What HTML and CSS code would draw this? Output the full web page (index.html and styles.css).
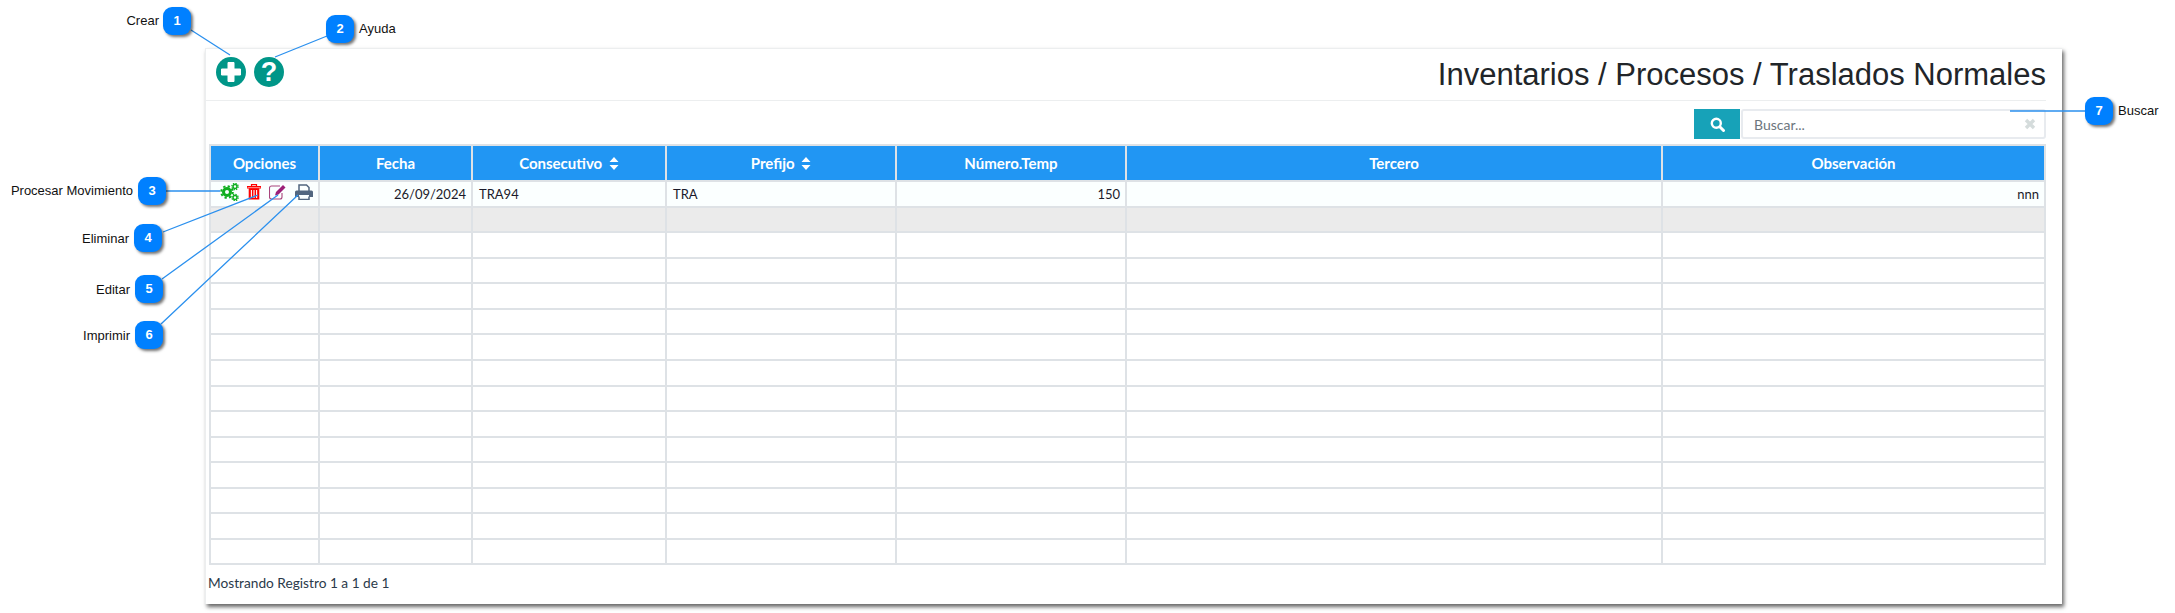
FILE: index.html
```html
<!DOCTYPE html>
<html lang="en">
  <head>
    <meta charset="UTF-8" />
    <title>Traslados Normales</title>
    <link rel="stylesheet" href="styles.css">
  </head>
  <body>
    <div class="panel">
      <div class="topbar">
        <div class="actions">
          <svg class="round" viewBox="0 0 30 30"><circle cx="15" cy="15" r="15" fill="#009688"/><path d="M12 5.500h6v6.500h6.500v6H18v6.500h-6V18H5.500v-6H12z" fill="#fff" stroke="#fff" stroke-linejoin="round"/></svg>
          <span class="round help">?</span>
        </div>
        <h1>Inventarios / Procesos / Traslados Normales</h1>
      </div>
      <div class="searchbar">
        <button class="searchBtn">
          <svg width="15" height="15" viewBox="0 0 15 15"><circle cx="6.300" cy="6.300" r="4.500" fill="none" stroke="#fff" stroke-width="2.400"/><path d="M9.800 9.800l3.700 3.700" stroke="#fff" stroke-width="3" stroke-linecap="round"/></svg>
        </button>
        <div class="searchInput">
          <span>Buscar...</span>
          <svg width="12" height="12" viewBox="0 0 12 12"><path d="M2 2l8 8M10 2l-8 8" stroke="#d5dcdc" stroke-width="3.400"/></svg>
        </div>
      </div>
      <table>
        <colgroup>
          <col class="c1" /><col class="c2" /><col class="c3" /><col class="c4" /><col class="c5" /><col class="c6" /><col />
        </colgroup>
        <thead>
          <tr>
            <th>Opciones</th>
            <th>Fecha</th>
            <th>Consecutivo <svg class="sort" viewBox="0 0 10 13"><path d="M5 0l4.500 5h-9zM5 13L.5 8h9z" fill="#fff"/></svg></th>
            <th>Prefijo <svg class="sort" viewBox="0 0 10 13"><path d="M5 0l4.500 5h-9zM5 13L.5 8h9z" fill="#fff"/></svg></th>
            <th>Número.Temp</th>
            <th>Tercero</th>
            <th>Observación</th>
          </tr>
        </thead>
        <tbody>
          <tr class="first">
            <td>
              <div class="opts">
                <svg width="19" height="18" viewBox="0 0 19 18">
                  <circle cx="7" cy="9" r="3.500" fill="none" stroke="#0fae1e" stroke-width="3"/>
                  <circle cx="7" cy="9" r="5.800" fill="none" stroke="#0fae1e" stroke-width="2" stroke-dasharray="2.300 2.250"/>
                  <circle cx="15" cy="3.500" r="2" fill="none" stroke="#0fae1e" stroke-width="1.500"/>
                  <circle cx="15" cy="3.500" r="3.200" fill="none" stroke="#0fae1e" stroke-width="1.200" stroke-dasharray="1.400 1.110"/>
                  <circle cx="15" cy="14.500" r="2" fill="none" stroke="#0fae1e" stroke-width="1.500"/>
                  <circle cx="15" cy="14.500" r="3.200" fill="none" stroke="#0fae1e" stroke-width="1.200" stroke-dasharray="1.400 1.110"/>
                </svg>
                <svg width="14" height="16" viewBox="0 0 14 16">
                  <path d="M0 2.500h14v1.500H0zM4.500 2.500V.6h5v1.900" fill="none" stroke="#f00" stroke-width="1.200"/>
                  <path d="M1.700 4.200h10.600v11.300H1.700z" fill="#f00"/>
                  <path d="M4.400 6v8M7 6v8M9.600 6v8" stroke="#fff" stroke-width="1.100"/>
                </svg>
                <svg width="18" height="16" viewBox="0 0 18 16">
                  <path d="M13 9v4a2 2 0 0 1-2 2H2.500a2 2 0 0 1-2-2V4a2 2 0 0 1 2-2H11" fill="none" stroke="#a8447c" stroke-width="1.100"/>
                  <path d="M6 11.500l1-3.500 7-7 2.500 2.500-7 7z" fill="#9c1f78"/>
                </svg>
                <svg width="18" height="16" viewBox="0 0 18 16">
                  <path d="M4 7V1h7.500L14 3.500V7M4 12.500v3h10v-3" fill="none" stroke="#52667f" stroke-width="1.500"/>
                  <path d="M1.500 6.500h15a1.500 1.500 0 0 1 1.500 1.500v5h-4v-2H4v2H0V8a1.500 1.500 0 0 1 1.500-1.500z" fill="#52667f"/>
                </svg>
              </div>
            </td>
            <td class="right">26/09/2024</td>
            <td class="left">TRA94</td>
            <td class="left">TRA</td>
            <td class="right">150</td>
            <td></td>
            <td class="right">nnn</td>
          </tr>
          <tr class="grey"><td></td><td></td><td></td><td></td><td></td><td></td><td></td></tr>
          <tr><td></td><td></td><td></td><td></td><td></td><td></td><td></td></tr>
          <tr><td></td><td></td><td></td><td></td><td></td><td></td><td></td></tr>
          <tr><td></td><td></td><td></td><td></td><td></td><td></td><td></td></tr>
          <tr><td></td><td></td><td></td><td></td><td></td><td></td><td></td></tr>
          <tr><td></td><td></td><td></td><td></td><td></td><td></td><td></td></tr>
          <tr><td></td><td></td><td></td><td></td><td></td><td></td><td></td></tr>
          <tr><td></td><td></td><td></td><td></td><td></td><td></td><td></td></tr>
          <tr><td></td><td></td><td></td><td></td><td></td><td></td><td></td></tr>
          <tr><td></td><td></td><td></td><td></td><td></td><td></td><td></td></tr>
          <tr><td></td><td></td><td></td><td></td><td></td><td></td><td></td></tr>
          <tr><td></td><td></td><td></td><td></td><td></td><td></td><td></td></tr>
          <tr><td></td><td></td><td></td><td></td><td></td><td></td><td></td></tr>
          <tr><td></td><td></td><td></td><td></td><td></td><td></td><td></td></tr>
        </tbody>
      </table>
      <div class="footer">Mostrando Registro 1 a 1 de 1</div>
    </div>

    <!-- callouts drawn over the screenshot -->
    <svg class="lines" width="2175" height="613">
      <path d="M191 30L230 55M327 36L275 57M166 191H220M163 232L258 195M162 279L278 195M161 324L298 195M2010 111H2085" stroke="#2b90ee" stroke-width="1.300" fill="none"/>
    </svg>
    <span class="note n1">Crear</span><span class="badge b1">1</span>
    <span class="badge b2">2</span><span class="note n2">Ayuda</span>
    <span class="note n3">Procesar Movimiento</span><span class="badge b3">3</span>
    <span class="note n4">Eliminar</span><span class="badge b4">4</span>
    <span class="note n5">Editar</span><span class="badge b5">5</span>
    <span class="note n6">Imprimir</span><span class="badge b6">6</span>
    <span class="badge b7">7</span><span class="note n7">Buscar</span>
  </body>
</html>
```

FILE: styles.css
```css
* {
  box-sizing: border-box;
}
html {
  font-family: "Lato", sans-serif;
}
body {
  margin: 0;
  padding: 48px 0 0 205px;
  width: 2175px;
  height: 613px;
  overflow: hidden;
  background: #fff;
  color: #222;
}
.panel {
  width: 1857px;
  height: 556px;
  padding: 0 16px 0 3px;
  background: #fff;
  border-top: 1px solid #eceeef;
  border-left: 1px solid #eceeef;
  box-shadow: 2px 3px 4px rgba(0, 0, 0, 0.6);
}
.topbar {
  display: flex;
  justify-content: space-between;
  align-items: center;
  height: 52px;
  margin-left: -3px;
  padding-left: 10px;
  border-bottom: 1px solid #eceeef;
}
.actions {
  display: flex;
  gap: 8px;
  margin-top: -6px;
}
.round {
  display: block;
  width: 30px;
  height: 30px;
}
.help {
  border-radius: 50%;
  background: #009688;
  color: #fff;
  font: bold 27px/30px "Liberation Sans", sans-serif;
  text-align: center;
}
h1 {
  margin: 0;
  font: normal 31px "Liberation Sans", sans-serif;
  color: #212529;
}
.searchbar {
  display: flex;
  justify-content: flex-end;
  height: 30px;
  margin-top: 8px;
}
.searchBtn {
  display: flex;
  align-items: center;
  justify-content: center;
  width: 46px;
  margin-right: 1px;
  padding: 0;
  border: 0;
  background: #17a2b8;
}
.searchInput {
  display: flex;
  align-items: center;
  justify-content: space-between;
  width: 305px;
  padding: 0 8px 0 11px;
  border: 2px solid #e8ebef;
  border-radius: 3px;
  color: #6c757d;
  font-size: 14px;
}
table {
  width: 1837px;
  margin-top: 5px;
  border-collapse: collapse;
  table-layout: fixed;
  font-size: 13px;
  color: #1a1a2a;
}
.c1 { width: 109px; }
.c2 { width: 153px; }
.c3 { width: 194px; }
.c4 { width: 230px; }
.c5 { width: 230px; }
.c6 { width: 536px; }
th {
  height: 36px;
  padding: 0;
  background: #2196f3;
  color: #fff;
  font-size: 15px;
  border: 2px solid #dee2e6;
}
td {
  height: 25.57px;
  padding: 0 5px;
  border: 2px solid #dee2e6;
}
.first td {
  background: #fbffff;
}
.grey td {
  background: #ebebeb;
}
.right {
  text-align: right;
}
td.left {
  padding-left: 6px;
}
.opts {
  display: flex;
  align-items: center;
  gap: 8px;
  padding-left: 4px;
  margin-top: -3px;
  height: 18px;
}
.sort {
  width: 10px;
  height: 13px;
  margin-left: 3px;
  vertical-align: -1px;
}
.footer {
  margin: 9px 0 0 -1px;
  font-size: 13.7px;
  color: #2b3a4a;
}
.lines {
  position: absolute;
  left: 0;
  top: 0;
  pointer-events: none;
}
.badge {
  position: absolute;
  width: 28px;
  height: 28px;
  border-radius: 9px;
  background: #0080ff;
  color: #fff;
  font: bold 13px/28px "Liberation Sans", sans-serif;
  text-align: center;
  box-shadow: 2px 2px 3px rgba(0, 0, 0, 0.55);
}
.note {
  position: absolute;
  font: 13px/16px "Liberation Sans", sans-serif;
  color: #111;
}
.b1 { left: 163px; top: 7px; }
.b2 { left: 326px; top: 15px; }
.b3 { left: 138px; top: 177px; }
.b4 { left: 134px; top: 224px; }
.b5 { left: 135px; top: 275px; }
.b6 { left: 135px; top: 321px; }
.b7 { left: 2085px; top: 97px; }
.n1 { right: 2016px; top: 13px; }
.n2 { left: 359px; top: 21px; }
.n3 { right: 2042px; top: 183px; }
.n4 { right: 2046px; top: 231px; }
.n5 { right: 2045px; top: 282px; }
.n6 { right: 2045px; top: 328px; }
.n7 { left: 2118px; top: 103px; }
```
